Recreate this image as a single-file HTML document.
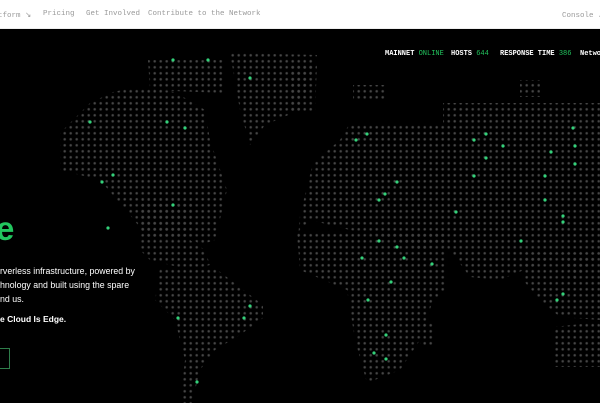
<!DOCTYPE html>
<html><head><meta charset="utf-8"><style>
*{margin:0;padding:0;box-sizing:border-box}
html,body{width:600px;height:403px;overflow:hidden;background:#000}
.nav{position:absolute;left:0;top:0;width:600px;height:29px;background:#fff;border-bottom:1px solid #eee;font-family:"Liberation Mono",monospace;font-size:7.5px;color:#999}
.nav span{position:absolute;top:10px;white-space:nowrap}
.stats{position:absolute;top:50px;font-family:"Liberation Mono",monospace;font-size:7px;font-weight:bold;color:#fff;white-space:nowrap}
.stats b{color:#22c55e;font-weight:normal}
.hero{position:absolute;font-family:"Liberation Sans",sans-serif;color:#fff;white-space:nowrap}
</style></head><body>
<svg width="600" height="403" style="position:absolute;left:0;top:0">
<defs><pattern id="d" patternUnits="userSpaceOnUse" x="1.7" y="-1.7" width="6" height="6"><rect x="1.8" y="1.8" width="2.4" height="2.4" rx="1" fill="#464646"/></pattern></defs>
<g fill="url(#d)">
<polygon points="148,60 225,60 223,93 150,90"/>
<polygon points="230,53 317,55 300,110 265,125 250,145 240,110"/>
<polygon points="290,63 317,63 315,113 290,113"/>
<polygon points="137,87 175,92 205,110 210,140 227,190 215,240 200,245 190,237 180,240 150,240 130,215 100,180 60,170 60,133 90,103 113,92"/>
<polygon points="140,200 192,200 190,240 205,250 210,265 190,270 150,260 140,250"/>
<polygon points="160,268 215,268 263,305 263,318 240,335 215,350 200,370 192,403 180,403 185,360 175,320 155,300"/>
<polygon points="353,85 387,85 387,100 353,100"/>
<polygon points="520,80 540,80 540,97 520,97"/>
<polygon points="443,103 600,103 600,123 443,123"/>
<polygon points="350,123 600,123 600,255 575,280 560,255 500,280 470,277 450,250 440,245 420,250 390,238 350,230 310,220 300,230 297,250 300,215 310,175 313,163 340,140"/>
<polygon points="297,233 447,233 447,290 433,300 420,340 400,370 367,383 355,340 347,290 300,270"/>
<polygon points="420,322 433,322 433,347 420,347"/>
<polygon points="523,253 600,253 600,320 560,317 540,300 523,280"/>
<polygon points="553,327 600,322 600,367 553,367"/>
</g>
<g fill="#34d17a">
<circle cx="173" cy="60" r="1.6"/><circle cx="208" cy="60" r="1.6"/><circle cx="250" cy="78" r="1.6"/><circle cx="90" cy="122" r="1.6"/><circle cx="167" cy="122" r="1.6"/><circle cx="185" cy="128" r="1.6"/><circle cx="113" cy="175" r="1.6"/><circle cx="102" cy="182" r="1.6"/><circle cx="173" cy="205" r="1.6"/><circle cx="108" cy="228" r="1.6"/>
<circle cx="356" cy="140" r="1.6"/><circle cx="367" cy="134" r="1.6"/><circle cx="474" cy="140" r="1.6"/><circle cx="486" cy="134" r="1.6"/><circle cx="503" cy="146" r="1.6"/><circle cx="486" cy="158" r="1.6"/><circle cx="573" cy="128" r="1.6"/><circle cx="551" cy="152" r="1.6"/><circle cx="575" cy="146" r="1.6"/><circle cx="575" cy="164" r="1.6"/><circle cx="474" cy="176" r="1.6"/><circle cx="545" cy="176" r="1.6"/><circle cx="397" cy="182" r="1.6"/><circle cx="385" cy="194" r="1.6"/><circle cx="379" cy="200" r="1.6"/><circle cx="456" cy="212" r="1.6"/><circle cx="545" cy="200" r="1.6"/><circle cx="563" cy="216" r="1.6"/><circle cx="563" cy="222" r="1.6"/><circle cx="379" cy="241" r="1.6"/><circle cx="397" cy="247" r="1.6"/><circle cx="521" cy="241" r="1.6"/><circle cx="362" cy="258" r="1.6"/><circle cx="404" cy="258" r="1.6"/><circle cx="432" cy="264" r="1.6"/><circle cx="391" cy="282" r="1.6"/><circle cx="368" cy="300" r="1.6"/><circle cx="563" cy="294" r="1.6"/><circle cx="557" cy="300" r="1.6"/><circle cx="250" cy="306" r="1.6"/><circle cx="178" cy="318" r="1.6"/><circle cx="244" cy="318" r="1.6"/><circle cx="386" cy="335" r="1.6"/><circle cx="374" cy="353" r="1.6"/><circle cx="386" cy="359" r="1.6"/><circle cx="197" cy="382" r="1.6"/>
</g>
</svg>
<div class="nav">
<span style="left:-2px">tform ↘</span>
<span style="left:43px">Pricing</span>
<span style="left:86px">Get Involved</span>
<span style="left:148px">Contribute to the Network</span>
<span style="left:562px">Console ↗</span>
</div>
<div class="stats" style="left:385px">MAINNET <b>ONLINE</b></div>
<div class="stats" style="left:451px">HOSTS <b>644</b></div>
<div class="stats" style="left:500px">RESPONSE TIME <b>386</b></div>
<div class="stats" style="left:580px">Network</div>
<div class="hero" style="left:-4px;top:210px;font-size:33px;font-weight:bold;color:#22c55e">e</div>
<div class="hero" style="left:0;top:264px;font-size:8.8px;line-height:14px">rverless infrastructure, powered by<br>hnology and built using the spare<br>nd us.</div>
<div class="hero" style="left:0;top:314px;font-size:8.5px;font-weight:bold">e Cloud Is Edge.</div>
<div style="position:absolute;left:-2px;top:348px;width:12px;height:21px;border:1px solid #2e7d4a"></div>
</body></html>
